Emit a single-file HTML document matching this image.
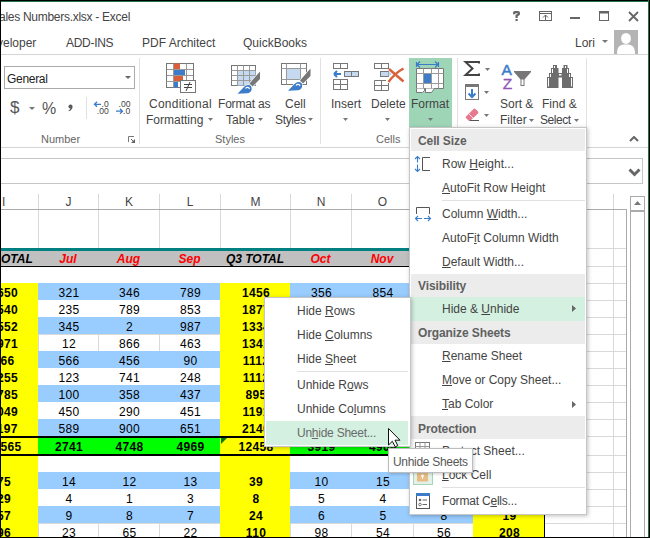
<!DOCTYPE html>
<html><head><meta charset="utf-8"><style>
html,body{margin:0;padding:0;}
body{width:650px;height:538px;overflow:hidden;position:relative;background:#fff;font-family:"Liberation Sans", sans-serif;}
.t{position:absolute;line-height:1;white-space:nowrap;}
.r{position:absolute;}
u{text-decoration:underline;text-underline-offset:1px;}
</style></head><body>
<div class="r" style="left:38px;top:194px;width:1px;height:344px;background:#d9d9d9;"></div>
<div class="r" style="left:98px;top:194px;width:1px;height:344px;background:#d9d9d9;"></div>
<div class="r" style="left:159px;top:194px;width:1px;height:344px;background:#d9d9d9;"></div>
<div class="r" style="left:220px;top:194px;width:1px;height:344px;background:#d9d9d9;"></div>
<div class="r" style="left:290px;top:194px;width:1px;height:344px;background:#d9d9d9;"></div>
<div class="r" style="left:351px;top:194px;width:1px;height:344px;background:#d9d9d9;"></div>
<div class="r" style="left:413px;top:194px;width:1px;height:344px;background:#d9d9d9;"></div>
<div class="r" style="left:473px;top:194px;width:1px;height:344px;background:#d9d9d9;"></div>
<div class="r" style="left:544px;top:194px;width:1px;height:344px;background:#d9d9d9;"></div>
<div class="r" style="left:613px;top:194px;width:1px;height:344px;background:#d9d9d9;"></div>
<div class="r" style="left:0px;top:248px;width:626px;height:1px;background:#d9d9d9;"></div>
<div class="r" style="left:0px;top:266px;width:626px;height:1px;background:#d9d9d9;"></div>
<div class="r" style="left:0px;top:283px;width:626px;height:1px;background:#d9d9d9;"></div>
<div class="r" style="left:0px;top:300px;width:626px;height:1px;background:#d9d9d9;"></div>
<div class="r" style="left:0px;top:317px;width:626px;height:1px;background:#d9d9d9;"></div>
<div class="r" style="left:0px;top:334px;width:626px;height:1px;background:#d9d9d9;"></div>
<div class="r" style="left:0px;top:351px;width:626px;height:1px;background:#d9d9d9;"></div>
<div class="r" style="left:0px;top:368px;width:626px;height:1px;background:#d9d9d9;"></div>
<div class="r" style="left:0px;top:385px;width:626px;height:1px;background:#d9d9d9;"></div>
<div class="r" style="left:0px;top:402px;width:626px;height:1px;background:#d9d9d9;"></div>
<div class="r" style="left:0px;top:419px;width:626px;height:1px;background:#d9d9d9;"></div>
<div class="r" style="left:0px;top:436px;width:626px;height:1px;background:#d9d9d9;"></div>
<div class="r" style="left:0px;top:455px;width:626px;height:1px;background:#d9d9d9;"></div>
<div class="r" style="left:0px;top:472px;width:626px;height:1px;background:#d9d9d9;"></div>
<div class="r" style="left:0px;top:489px;width:626px;height:1px;background:#d9d9d9;"></div>
<div class="r" style="left:0px;top:506px;width:626px;height:1px;background:#d9d9d9;"></div>
<div class="r" style="left:0px;top:523px;width:626px;height:1px;background:#d9d9d9;"></div>
<div class="r" style="left:626px;top:209px;width:1px;height:329px;background:#ababab;"></div>
<div class="r" style="left:0px;top:209px;width:626px;height:1px;background:#ababab;"></div>
<div class="r" style="left:0px;top:248px;width:544px;height:3px;background:#008080;"></div>
<div class="r" style="left:0px;top:251px;width:544px;height:14px;background:#c0c0c0;"></div>
<div class="r" style="left:0px;top:265px;width:544px;height:1px;background:#c9c9c9;"></div>
<div class="r" style="left:0px;top:266px;width:544px;height:1px;background:#000;"></div>
<div class="r" style="left:0px;top:267px;width:544px;height:16px;background:#ffffff;"></div>
<div class="r" style="left:-32px;top:283px;width:70px;height:17px;background:#ffff00;"></div>
<div class="r" style="left:38px;top:283px;width:60px;height:17px;background:#99ccff;"></div>
<div class="r" style="left:98px;top:283px;width:61px;height:17px;background:#99ccff;"></div>
<div class="r" style="left:159px;top:283px;width:61px;height:17px;background:#99ccff;"></div>
<div class="r" style="left:220px;top:283px;width:70px;height:17px;background:#ffff00;"></div>
<div class="r" style="left:290px;top:283px;width:61px;height:17px;background:#99ccff;"></div>
<div class="r" style="left:351px;top:283px;width:62px;height:17px;background:#99ccff;"></div>
<div class="r" style="left:413px;top:283px;width:60px;height:17px;background:#99ccff;"></div>
<div class="r" style="left:473px;top:283px;width:71px;height:17px;background:#ffff00;"></div>
<div class="r" style="left:-32px;top:300px;width:70px;height:17px;background:#ffff00;"></div>
<div class="r" style="left:38px;top:300px;width:60px;height:17px;background:#ffffff;"></div>
<div class="r" style="left:98px;top:300px;width:61px;height:17px;background:#ffffff;"></div>
<div class="r" style="left:159px;top:300px;width:61px;height:17px;background:#ffffff;"></div>
<div class="r" style="left:220px;top:300px;width:70px;height:17px;background:#ffff00;"></div>
<div class="r" style="left:290px;top:300px;width:61px;height:17px;background:#ffffff;"></div>
<div class="r" style="left:351px;top:300px;width:62px;height:17px;background:#ffffff;"></div>
<div class="r" style="left:413px;top:300px;width:60px;height:17px;background:#ffffff;"></div>
<div class="r" style="left:473px;top:300px;width:71px;height:17px;background:#ffff00;"></div>
<div class="r" style="left:-32px;top:317px;width:70px;height:17px;background:#ffff00;"></div>
<div class="r" style="left:38px;top:317px;width:60px;height:17px;background:#99ccff;"></div>
<div class="r" style="left:98px;top:317px;width:61px;height:17px;background:#99ccff;"></div>
<div class="r" style="left:159px;top:317px;width:61px;height:17px;background:#99ccff;"></div>
<div class="r" style="left:220px;top:317px;width:70px;height:17px;background:#ffff00;"></div>
<div class="r" style="left:290px;top:317px;width:61px;height:17px;background:#99ccff;"></div>
<div class="r" style="left:351px;top:317px;width:62px;height:17px;background:#99ccff;"></div>
<div class="r" style="left:413px;top:317px;width:60px;height:17px;background:#99ccff;"></div>
<div class="r" style="left:473px;top:317px;width:71px;height:17px;background:#ffff00;"></div>
<div class="r" style="left:-32px;top:334px;width:70px;height:17px;background:#ffff00;"></div>
<div class="r" style="left:220px;top:334px;width:70px;height:17px;background:#ffff00;"></div>
<div class="r" style="left:473px;top:334px;width:71px;height:17px;background:#ffff00;"></div>
<div class="r" style="left:-32px;top:351px;width:70px;height:17px;background:#ffff00;"></div>
<div class="r" style="left:38px;top:351px;width:60px;height:17px;background:#99ccff;"></div>
<div class="r" style="left:98px;top:351px;width:61px;height:17px;background:#99ccff;"></div>
<div class="r" style="left:159px;top:351px;width:61px;height:17px;background:#99ccff;"></div>
<div class="r" style="left:220px;top:351px;width:70px;height:17px;background:#ffff00;"></div>
<div class="r" style="left:290px;top:351px;width:61px;height:17px;background:#99ccff;"></div>
<div class="r" style="left:351px;top:351px;width:62px;height:17px;background:#99ccff;"></div>
<div class="r" style="left:413px;top:351px;width:60px;height:17px;background:#99ccff;"></div>
<div class="r" style="left:473px;top:351px;width:71px;height:17px;background:#ffff00;"></div>
<div class="r" style="left:-32px;top:368px;width:70px;height:17px;background:#ffff00;"></div>
<div class="r" style="left:38px;top:368px;width:60px;height:17px;background:#ffffff;"></div>
<div class="r" style="left:98px;top:368px;width:61px;height:17px;background:#ffffff;"></div>
<div class="r" style="left:159px;top:368px;width:61px;height:17px;background:#ffffff;"></div>
<div class="r" style="left:220px;top:368px;width:70px;height:17px;background:#ffff00;"></div>
<div class="r" style="left:290px;top:368px;width:61px;height:17px;background:#ffffff;"></div>
<div class="r" style="left:351px;top:368px;width:62px;height:17px;background:#ffffff;"></div>
<div class="r" style="left:413px;top:368px;width:60px;height:17px;background:#ffffff;"></div>
<div class="r" style="left:473px;top:368px;width:71px;height:17px;background:#ffff00;"></div>
<div class="r" style="left:-32px;top:385px;width:70px;height:17px;background:#ffff00;"></div>
<div class="r" style="left:38px;top:385px;width:60px;height:17px;background:#99ccff;"></div>
<div class="r" style="left:98px;top:385px;width:61px;height:17px;background:#99ccff;"></div>
<div class="r" style="left:159px;top:385px;width:61px;height:17px;background:#99ccff;"></div>
<div class="r" style="left:220px;top:385px;width:70px;height:17px;background:#ffff00;"></div>
<div class="r" style="left:290px;top:385px;width:61px;height:17px;background:#99ccff;"></div>
<div class="r" style="left:351px;top:385px;width:62px;height:17px;background:#99ccff;"></div>
<div class="r" style="left:413px;top:385px;width:60px;height:17px;background:#99ccff;"></div>
<div class="r" style="left:473px;top:385px;width:71px;height:17px;background:#ffff00;"></div>
<div class="r" style="left:-32px;top:402px;width:70px;height:17px;background:#ffff00;"></div>
<div class="r" style="left:38px;top:402px;width:60px;height:17px;background:#ffffff;"></div>
<div class="r" style="left:98px;top:402px;width:61px;height:17px;background:#ffffff;"></div>
<div class="r" style="left:159px;top:402px;width:61px;height:17px;background:#ffffff;"></div>
<div class="r" style="left:220px;top:402px;width:70px;height:17px;background:#ffff00;"></div>
<div class="r" style="left:290px;top:402px;width:61px;height:17px;background:#ffffff;"></div>
<div class="r" style="left:351px;top:402px;width:62px;height:17px;background:#ffffff;"></div>
<div class="r" style="left:413px;top:402px;width:60px;height:17px;background:#ffffff;"></div>
<div class="r" style="left:473px;top:402px;width:71px;height:17px;background:#ffff00;"></div>
<div class="r" style="left:-32px;top:419px;width:70px;height:17px;background:#ffff00;"></div>
<div class="r" style="left:38px;top:419px;width:60px;height:17px;background:#99ccff;"></div>
<div class="r" style="left:98px;top:419px;width:61px;height:17px;background:#99ccff;"></div>
<div class="r" style="left:159px;top:419px;width:61px;height:17px;background:#99ccff;"></div>
<div class="r" style="left:220px;top:419px;width:70px;height:17px;background:#ffff00;"></div>
<div class="r" style="left:290px;top:419px;width:61px;height:17px;background:#99ccff;"></div>
<div class="r" style="left:351px;top:419px;width:62px;height:17px;background:#99ccff;"></div>
<div class="r" style="left:413px;top:419px;width:60px;height:17px;background:#99ccff;"></div>
<div class="r" style="left:473px;top:419px;width:71px;height:17px;background:#ffff00;"></div>
<div class="r" style="left:0px;top:436px;width:544px;height:2px;background:#000;"></div>
<div class="r" style="left:-32px;top:438px;width:70px;height:16px;background:#ffff00;"></div>
<div class="r" style="left:38px;top:438px;width:60px;height:16px;background:#00ff00;"></div>
<div class="r" style="left:98px;top:438px;width:61px;height:16px;background:#00ff00;"></div>
<div class="r" style="left:159px;top:438px;width:61px;height:16px;background:#00ff00;"></div>
<div class="r" style="left:220px;top:438px;width:70px;height:16px;background:#ffff00;"></div>
<div class="r" style="left:290px;top:438px;width:61px;height:16px;background:#00ff00;"></div>
<div class="r" style="left:351px;top:438px;width:62px;height:16px;background:#00ff00;"></div>
<div class="r" style="left:413px;top:438px;width:60px;height:16px;background:#00ff00;"></div>
<div class="r" style="left:473px;top:438px;width:71px;height:16px;background:#ffff00;"></div>
<div class="r" style="left:0px;top:454px;width:544px;height:2px;background:#000;"></div>
<div class="r" style="left:-32px;top:456px;width:70px;height:16px;background:#ffff00;"></div>
<div class="r" style="left:38px;top:456px;width:60px;height:16px;background:#ffffff;"></div>
<div class="r" style="left:98px;top:456px;width:61px;height:16px;background:#ffffff;"></div>
<div class="r" style="left:159px;top:456px;width:61px;height:16px;background:#ffffff;"></div>
<div class="r" style="left:220px;top:456px;width:70px;height:16px;background:#ffff00;"></div>
<div class="r" style="left:290px;top:456px;width:61px;height:16px;background:#ffffff;"></div>
<div class="r" style="left:351px;top:456px;width:62px;height:16px;background:#ffffff;"></div>
<div class="r" style="left:413px;top:456px;width:60px;height:16px;background:#ffffff;"></div>
<div class="r" style="left:473px;top:456px;width:71px;height:16px;background:#ffff00;"></div>
<div class="r" style="left:-32px;top:472px;width:70px;height:17px;background:#ffff00;"></div>
<div class="r" style="left:38px;top:472px;width:60px;height:17px;background:#99ccff;"></div>
<div class="r" style="left:98px;top:472px;width:61px;height:17px;background:#99ccff;"></div>
<div class="r" style="left:159px;top:472px;width:61px;height:17px;background:#99ccff;"></div>
<div class="r" style="left:220px;top:472px;width:70px;height:17px;background:#ffff00;"></div>
<div class="r" style="left:290px;top:472px;width:61px;height:17px;background:#99ccff;"></div>
<div class="r" style="left:351px;top:472px;width:62px;height:17px;background:#99ccff;"></div>
<div class="r" style="left:413px;top:472px;width:60px;height:17px;background:#99ccff;"></div>
<div class="r" style="left:473px;top:472px;width:71px;height:17px;background:#ffff00;"></div>
<div class="r" style="left:-32px;top:489px;width:70px;height:17px;background:#ffff00;"></div>
<div class="r" style="left:38px;top:489px;width:60px;height:17px;background:#ffffff;"></div>
<div class="r" style="left:98px;top:489px;width:61px;height:17px;background:#ffffff;"></div>
<div class="r" style="left:159px;top:489px;width:61px;height:17px;background:#ffffff;"></div>
<div class="r" style="left:220px;top:489px;width:70px;height:17px;background:#ffff00;"></div>
<div class="r" style="left:290px;top:489px;width:61px;height:17px;background:#ffffff;"></div>
<div class="r" style="left:351px;top:489px;width:62px;height:17px;background:#ffffff;"></div>
<div class="r" style="left:413px;top:489px;width:60px;height:17px;background:#ffffff;"></div>
<div class="r" style="left:473px;top:489px;width:71px;height:17px;background:#ffff00;"></div>
<div class="r" style="left:-32px;top:506px;width:70px;height:17px;background:#ffff00;"></div>
<div class="r" style="left:38px;top:506px;width:60px;height:17px;background:#99ccff;"></div>
<div class="r" style="left:98px;top:506px;width:61px;height:17px;background:#99ccff;"></div>
<div class="r" style="left:159px;top:506px;width:61px;height:17px;background:#99ccff;"></div>
<div class="r" style="left:220px;top:506px;width:70px;height:17px;background:#ffff00;"></div>
<div class="r" style="left:290px;top:506px;width:61px;height:17px;background:#99ccff;"></div>
<div class="r" style="left:351px;top:506px;width:62px;height:17px;background:#99ccff;"></div>
<div class="r" style="left:413px;top:506px;width:60px;height:17px;background:#99ccff;"></div>
<div class="r" style="left:473px;top:506px;width:71px;height:17px;background:#ffff00;"></div>
<div class="r" style="left:-32px;top:523px;width:70px;height:17px;background:#ffff00;"></div>
<div class="r" style="left:220px;top:523px;width:70px;height:17px;background:#ffff00;"></div>
<div class="r" style="left:473px;top:523px;width:71px;height:17px;background:#ffff00;"></div>
<div class="r" style="left:544px;top:283px;width:1px;height:255px;background:#000;"></div>
<div class="t" style="left:2px;top:196px;font-size:12px;color:#444">I</div>
<div class="t" style="left:38.5px;top:196px;width:60px;text-align:center;font-size:12px;color:#444;font-weight:normal;font-style:normal;">J</div>
<div class="t" style="left:98.5px;top:196px;width:61px;text-align:center;font-size:12px;color:#444;font-weight:normal;font-style:normal;">K</div>
<div class="t" style="left:159.5px;top:196px;width:61px;text-align:center;font-size:12px;color:#444;font-weight:normal;font-style:normal;">L</div>
<div class="t" style="left:220.5px;top:196px;width:70px;text-align:center;font-size:12px;color:#444;font-weight:normal;font-style:normal;">M</div>
<div class="t" style="left:290.5px;top:196px;width:61px;text-align:center;font-size:12px;color:#444;font-weight:normal;font-style:normal;">N</div>
<div class="t" style="left:351.5px;top:196px;width:62px;text-align:center;font-size:12px;color:#444;font-weight:normal;font-style:normal;">O</div>
<div class="t" style="left:413.5px;top:196px;width:60px;text-align:center;font-size:12px;color:#444;font-weight:normal;font-style:normal;">P</div>
<div class="t" style="left:473.5px;top:196px;width:71px;text-align:center;font-size:12px;color:#444;font-weight:normal;font-style:normal;">Q</div>
<div class="t" style="left:544.5px;top:196px;width:69px;text-align:center;font-size:12px;color:#444;font-weight:normal;font-style:normal;">R</div>
<div class="t" style="left:1px;top:253px;font-size:12px;color:#000;font-weight:bold;font-style:italic">OTAL</div>
<div class="t" style="left:38px;top:253px;width:60px;text-align:center;font-size:12px;color:#ff0000;font-weight:bold;font-style:italic;">Jul</div>
<div class="t" style="left:98px;top:253px;width:61px;text-align:center;font-size:12px;color:#ff0000;font-weight:bold;font-style:italic;">Aug</div>
<div class="t" style="left:159px;top:253px;width:61px;text-align:center;font-size:12px;color:#ff0000;font-weight:bold;font-style:italic;">Sep</div>
<div class="t" style="left:220px;top:253px;width:70px;text-align:center;font-size:12px;color:#000;font-weight:bold;font-style:italic;">Q3 TOTAL</div>
<div class="t" style="left:290px;top:253px;width:61px;text-align:center;font-size:12px;color:#ff0000;font-weight:bold;font-style:italic;">Oct</div>
<div class="t" style="left:351px;top:253px;width:62px;text-align:center;font-size:12px;color:#ff0000;font-weight:bold;font-style:italic;">Nov</div>
<div class="t" style="left:413px;top:253px;width:60px;text-align:center;font-size:12px;color:#ff0000;font-weight:bold;font-style:italic;">Dec</div>
<div class="t" style="left:473px;top:253px;width:71px;text-align:center;font-size:12px;color:#000;font-weight:bold;font-style:italic;">Q4 TOTAL</div>
<div class="t" style="left:-31px;top:287px;width:70px;text-align:center;font-size:12px;color:#000;font-weight:bold;font-style:normal;letter-spacing:0.3px;">1650</div>
<div class="t" style="left:39px;top:287px;width:60px;text-align:center;font-size:12px;color:#000;font-weight:normal;font-style:normal;letter-spacing:0.3px;">321</div>
<div class="t" style="left:99px;top:287px;width:61px;text-align:center;font-size:12px;color:#000;font-weight:normal;font-style:normal;letter-spacing:0.3px;">346</div>
<div class="t" style="left:160px;top:287px;width:61px;text-align:center;font-size:12px;color:#000;font-weight:normal;font-style:normal;letter-spacing:0.3px;">789</div>
<div class="t" style="left:221px;top:287px;width:70px;text-align:center;font-size:12px;color:#000;font-weight:bold;font-style:normal;letter-spacing:0.3px;">1456</div>
<div class="t" style="left:291px;top:287px;width:61px;text-align:center;font-size:12px;color:#000;font-weight:normal;font-style:normal;letter-spacing:0.3px;">356</div>
<div class="t" style="left:352px;top:287px;width:62px;text-align:center;font-size:12px;color:#000;font-weight:normal;font-style:normal;letter-spacing:0.3px;">854</div>
<div class="t" style="left:414px;top:287px;width:60px;text-align:center;font-size:12px;color:#000;font-weight:normal;font-style:normal;letter-spacing:0.3px;">512</div>
<div class="t" style="left:474px;top:287px;width:71px;text-align:center;font-size:12px;color:#000;font-weight:bold;font-style:normal;letter-spacing:0.3px;">1722</div>
<div class="t" style="left:-31px;top:304px;width:70px;text-align:center;font-size:12px;color:#000;font-weight:bold;font-style:normal;letter-spacing:0.3px;">1540</div>
<div class="t" style="left:39px;top:304px;width:60px;text-align:center;font-size:12px;color:#000;font-weight:normal;font-style:normal;letter-spacing:0.3px;">235</div>
<div class="t" style="left:99px;top:304px;width:61px;text-align:center;font-size:12px;color:#000;font-weight:normal;font-style:normal;letter-spacing:0.3px;">789</div>
<div class="t" style="left:160px;top:304px;width:61px;text-align:center;font-size:12px;color:#000;font-weight:normal;font-style:normal;letter-spacing:0.3px;">853</div>
<div class="t" style="left:221px;top:304px;width:70px;text-align:center;font-size:12px;color:#000;font-weight:bold;font-style:normal;letter-spacing:0.3px;">1877</div>
<div class="t" style="left:291px;top:304px;width:61px;text-align:center;font-size:12px;color:#000;font-weight:normal;font-style:normal;letter-spacing:0.3px;">412</div>
<div class="t" style="left:352px;top:304px;width:62px;text-align:center;font-size:12px;color:#000;font-weight:normal;font-style:normal;letter-spacing:0.3px;">633</div>
<div class="t" style="left:414px;top:304px;width:60px;text-align:center;font-size:12px;color:#000;font-weight:normal;font-style:normal;letter-spacing:0.3px;">278</div>
<div class="t" style="left:474px;top:304px;width:71px;text-align:center;font-size:12px;color:#000;font-weight:bold;font-style:normal;letter-spacing:0.3px;">1323</div>
<div class="t" style="left:-31px;top:321px;width:70px;text-align:center;font-size:12px;color:#000;font-weight:bold;font-style:normal;letter-spacing:0.3px;">1552</div>
<div class="t" style="left:39px;top:321px;width:60px;text-align:center;font-size:12px;color:#000;font-weight:normal;font-style:normal;letter-spacing:0.3px;">345</div>
<div class="t" style="left:99px;top:321px;width:61px;text-align:center;font-size:12px;color:#000;font-weight:normal;font-style:normal;letter-spacing:0.3px;">2</div>
<div class="t" style="left:160px;top:321px;width:61px;text-align:center;font-size:12px;color:#000;font-weight:normal;font-style:normal;letter-spacing:0.3px;">987</div>
<div class="t" style="left:221px;top:321px;width:70px;text-align:center;font-size:12px;color:#000;font-weight:bold;font-style:normal;letter-spacing:0.3px;">1334</div>
<div class="t" style="left:291px;top:321px;width:61px;text-align:center;font-size:12px;color:#000;font-weight:normal;font-style:normal;letter-spacing:0.3px;">234</div>
<div class="t" style="left:352px;top:321px;width:62px;text-align:center;font-size:12px;color:#000;font-weight:normal;font-style:normal;letter-spacing:0.3px;">567</div>
<div class="t" style="left:414px;top:321px;width:60px;text-align:center;font-size:12px;color:#000;font-weight:normal;font-style:normal;letter-spacing:0.3px;">890</div>
<div class="t" style="left:474px;top:321px;width:71px;text-align:center;font-size:12px;color:#000;font-weight:bold;font-style:normal;letter-spacing:0.3px;">1691</div>
<div class="t" style="left:-31px;top:338px;width:70px;text-align:center;font-size:12px;color:#000;font-weight:bold;font-style:normal;letter-spacing:0.3px;">1971</div>
<div class="t" style="left:39px;top:338px;width:60px;text-align:center;font-size:12px;color:#000;font-weight:normal;font-style:normal;letter-spacing:0.3px;">12</div>
<div class="t" style="left:99px;top:338px;width:61px;text-align:center;font-size:12px;color:#000;font-weight:normal;font-style:normal;letter-spacing:0.3px;">866</div>
<div class="t" style="left:160px;top:338px;width:61px;text-align:center;font-size:12px;color:#000;font-weight:normal;font-style:normal;letter-spacing:0.3px;">463</div>
<div class="t" style="left:221px;top:338px;width:70px;text-align:center;font-size:12px;color:#000;font-weight:bold;font-style:normal;letter-spacing:0.3px;">1341</div>
<div class="t" style="left:291px;top:338px;width:61px;text-align:center;font-size:12px;color:#000;font-weight:normal;font-style:normal;letter-spacing:0.3px;">678</div>
<div class="t" style="left:352px;top:338px;width:62px;text-align:center;font-size:12px;color:#000;font-weight:normal;font-style:normal;letter-spacing:0.3px;">123</div>
<div class="t" style="left:414px;top:338px;width:60px;text-align:center;font-size:12px;color:#000;font-weight:normal;font-style:normal;letter-spacing:0.3px;">456</div>
<div class="t" style="left:474px;top:338px;width:71px;text-align:center;font-size:12px;color:#000;font-weight:bold;font-style:normal;letter-spacing:0.3px;">1257</div>
<div class="t" style="left:-31px;top:355px;width:70px;text-align:center;font-size:12px;color:#000;font-weight:bold;font-style:normal;letter-spacing:0.3px;">866</div>
<div class="t" style="left:39px;top:355px;width:60px;text-align:center;font-size:12px;color:#000;font-weight:normal;font-style:normal;letter-spacing:0.3px;">566</div>
<div class="t" style="left:99px;top:355px;width:61px;text-align:center;font-size:12px;color:#000;font-weight:normal;font-style:normal;letter-spacing:0.3px;">456</div>
<div class="t" style="left:160px;top:355px;width:61px;text-align:center;font-size:12px;color:#000;font-weight:normal;font-style:normal;letter-spacing:0.3px;">90</div>
<div class="t" style="left:221px;top:355px;width:70px;text-align:center;font-size:12px;color:#000;font-weight:bold;font-style:normal;letter-spacing:0.3px;">1112</div>
<div class="t" style="left:291px;top:355px;width:61px;text-align:center;font-size:12px;color:#000;font-weight:normal;font-style:normal;letter-spacing:0.3px;">345</div>
<div class="t" style="left:352px;top:355px;width:62px;text-align:center;font-size:12px;color:#000;font-weight:normal;font-style:normal;letter-spacing:0.3px;">789</div>
<div class="t" style="left:414px;top:355px;width:60px;text-align:center;font-size:12px;color:#000;font-weight:normal;font-style:normal;letter-spacing:0.3px;">234</div>
<div class="t" style="left:474px;top:355px;width:71px;text-align:center;font-size:12px;color:#000;font-weight:bold;font-style:normal;letter-spacing:0.3px;">1368</div>
<div class="t" style="left:-31px;top:372px;width:70px;text-align:center;font-size:12px;color:#000;font-weight:bold;font-style:normal;letter-spacing:0.3px;">1255</div>
<div class="t" style="left:39px;top:372px;width:60px;text-align:center;font-size:12px;color:#000;font-weight:normal;font-style:normal;letter-spacing:0.3px;">123</div>
<div class="t" style="left:99px;top:372px;width:61px;text-align:center;font-size:12px;color:#000;font-weight:normal;font-style:normal;letter-spacing:0.3px;">741</div>
<div class="t" style="left:160px;top:372px;width:61px;text-align:center;font-size:12px;color:#000;font-weight:normal;font-style:normal;letter-spacing:0.3px;">248</div>
<div class="t" style="left:221px;top:372px;width:70px;text-align:center;font-size:12px;color:#000;font-weight:bold;font-style:normal;letter-spacing:0.3px;">1112</div>
<div class="t" style="left:291px;top:372px;width:61px;text-align:center;font-size:12px;color:#000;font-weight:normal;font-style:normal;letter-spacing:0.3px;">567</div>
<div class="t" style="left:352px;top:372px;width:62px;text-align:center;font-size:12px;color:#000;font-weight:normal;font-style:normal;letter-spacing:0.3px;">234</div>
<div class="t" style="left:414px;top:372px;width:60px;text-align:center;font-size:12px;color:#000;font-weight:normal;font-style:normal;letter-spacing:0.3px;">789</div>
<div class="t" style="left:474px;top:372px;width:71px;text-align:center;font-size:12px;color:#000;font-weight:bold;font-style:normal;letter-spacing:0.3px;">1590</div>
<div class="t" style="left:-31px;top:389px;width:70px;text-align:center;font-size:12px;color:#000;font-weight:bold;font-style:normal;letter-spacing:0.3px;">1785</div>
<div class="t" style="left:39px;top:389px;width:60px;text-align:center;font-size:12px;color:#000;font-weight:normal;font-style:normal;letter-spacing:0.3px;">100</div>
<div class="t" style="left:99px;top:389px;width:61px;text-align:center;font-size:12px;color:#000;font-weight:normal;font-style:normal;letter-spacing:0.3px;">358</div>
<div class="t" style="left:160px;top:389px;width:61px;text-align:center;font-size:12px;color:#000;font-weight:normal;font-style:normal;letter-spacing:0.3px;">437</div>
<div class="t" style="left:221px;top:389px;width:70px;text-align:center;font-size:12px;color:#000;font-weight:bold;font-style:normal;letter-spacing:0.3px;">895</div>
<div class="t" style="left:291px;top:389px;width:61px;text-align:center;font-size:12px;color:#000;font-weight:normal;font-style:normal;letter-spacing:0.3px;">890</div>
<div class="t" style="left:352px;top:389px;width:62px;text-align:center;font-size:12px;color:#000;font-weight:normal;font-style:normal;letter-spacing:0.3px;">456</div>
<div class="t" style="left:414px;top:389px;width:60px;text-align:center;font-size:12px;color:#000;font-weight:normal;font-style:normal;letter-spacing:0.3px;">123</div>
<div class="t" style="left:474px;top:389px;width:71px;text-align:center;font-size:12px;color:#000;font-weight:bold;font-style:normal;letter-spacing:0.3px;">1469</div>
<div class="t" style="left:-31px;top:406px;width:70px;text-align:center;font-size:12px;color:#000;font-weight:bold;font-style:normal;letter-spacing:0.3px;">1049</div>
<div class="t" style="left:39px;top:406px;width:60px;text-align:center;font-size:12px;color:#000;font-weight:normal;font-style:normal;letter-spacing:0.3px;">450</div>
<div class="t" style="left:99px;top:406px;width:61px;text-align:center;font-size:12px;color:#000;font-weight:normal;font-style:normal;letter-spacing:0.3px;">290</div>
<div class="t" style="left:160px;top:406px;width:61px;text-align:center;font-size:12px;color:#000;font-weight:normal;font-style:normal;letter-spacing:0.3px;">451</div>
<div class="t" style="left:221px;top:406px;width:70px;text-align:center;font-size:12px;color:#000;font-weight:bold;font-style:normal;letter-spacing:0.3px;">1191</div>
<div class="t" style="left:291px;top:406px;width:61px;text-align:center;font-size:12px;color:#000;font-weight:normal;font-style:normal;letter-spacing:0.3px;">123</div>
<div class="t" style="left:352px;top:406px;width:62px;text-align:center;font-size:12px;color:#000;font-weight:normal;font-style:normal;letter-spacing:0.3px;">789</div>
<div class="t" style="left:414px;top:406px;width:60px;text-align:center;font-size:12px;color:#000;font-weight:normal;font-style:normal;letter-spacing:0.3px;">456</div>
<div class="t" style="left:474px;top:406px;width:71px;text-align:center;font-size:12px;color:#000;font-weight:bold;font-style:normal;letter-spacing:0.3px;">1368</div>
<div class="t" style="left:-31px;top:423px;width:70px;text-align:center;font-size:12px;color:#000;font-weight:bold;font-style:normal;letter-spacing:0.3px;">1197</div>
<div class="t" style="left:39px;top:423px;width:60px;text-align:center;font-size:12px;color:#000;font-weight:normal;font-style:normal;letter-spacing:0.3px;">589</div>
<div class="t" style="left:99px;top:423px;width:61px;text-align:center;font-size:12px;color:#000;font-weight:normal;font-style:normal;letter-spacing:0.3px;">900</div>
<div class="t" style="left:160px;top:423px;width:61px;text-align:center;font-size:12px;color:#000;font-weight:normal;font-style:normal;letter-spacing:0.3px;">651</div>
<div class="t" style="left:221px;top:423px;width:70px;text-align:center;font-size:12px;color:#000;font-weight:bold;font-style:normal;letter-spacing:0.3px;">2140</div>
<div class="t" style="left:291px;top:423px;width:61px;text-align:center;font-size:12px;color:#000;font-weight:normal;font-style:normal;letter-spacing:0.3px;">234</div>
<div class="t" style="left:352px;top:423px;width:62px;text-align:center;font-size:12px;color:#000;font-weight:normal;font-style:normal;letter-spacing:0.3px;">567</div>
<div class="t" style="left:414px;top:423px;width:60px;text-align:center;font-size:12px;color:#000;font-weight:normal;font-style:normal;letter-spacing:0.3px;">890</div>
<div class="t" style="left:474px;top:423px;width:71px;text-align:center;font-size:12px;color:#000;font-weight:bold;font-style:normal;letter-spacing:0.3px;">1691</div>
<div class="t" style="left:-31px;top:441px;width:70px;text-align:center;font-size:12px;color:#000;font-weight:bold;font-style:normal;letter-spacing:0.3px;">12565</div>
<div class="t" style="left:39px;top:441px;width:60px;text-align:center;font-size:12px;color:#000;font-weight:bold;font-style:normal;letter-spacing:0.3px;">2741</div>
<div class="t" style="left:99px;top:441px;width:61px;text-align:center;font-size:12px;color:#000;font-weight:bold;font-style:normal;letter-spacing:0.3px;">4748</div>
<div class="t" style="left:160px;top:441px;width:61px;text-align:center;font-size:12px;color:#000;font-weight:bold;font-style:normal;letter-spacing:0.3px;">4969</div>
<div class="t" style="left:221px;top:441px;width:70px;text-align:center;font-size:12px;color:#000;font-weight:bold;font-style:normal;letter-spacing:0.3px;">12458</div>
<div class="t" style="left:291px;top:441px;width:61px;text-align:center;font-size:12px;color:#000;font-weight:bold;font-style:normal;letter-spacing:0.3px;">3919</div>
<div class="t" style="left:352px;top:441px;width:62px;text-align:center;font-size:12px;color:#000;font-weight:bold;font-style:normal;letter-spacing:0.3px;">4908</div>
<div class="t" style="left:414px;top:441px;width:60px;text-align:center;font-size:12px;color:#000;font-weight:bold;font-style:normal;letter-spacing:0.3px;">4628</div>
<div class="t" style="left:474px;top:441px;width:71px;text-align:center;font-size:12px;color:#000;font-weight:bold;font-style:normal;letter-spacing:0.3px;">13455</div>
<div class="t" style="left:-31px;top:476px;width:70px;text-align:center;font-size:12px;color:#000;font-weight:bold;font-style:normal;letter-spacing:0.3px;">75</div>
<div class="t" style="left:39px;top:476px;width:60px;text-align:center;font-size:12px;color:#000;font-weight:normal;font-style:normal;letter-spacing:0.3px;">14</div>
<div class="t" style="left:99px;top:476px;width:61px;text-align:center;font-size:12px;color:#000;font-weight:normal;font-style:normal;letter-spacing:0.3px;">12</div>
<div class="t" style="left:160px;top:476px;width:61px;text-align:center;font-size:12px;color:#000;font-weight:normal;font-style:normal;letter-spacing:0.3px;">13</div>
<div class="t" style="left:221px;top:476px;width:70px;text-align:center;font-size:12px;color:#000;font-weight:bold;font-style:normal;letter-spacing:0.3px;">39</div>
<div class="t" style="left:291px;top:476px;width:61px;text-align:center;font-size:12px;color:#000;font-weight:normal;font-style:normal;letter-spacing:0.3px;">10</div>
<div class="t" style="left:352px;top:476px;width:62px;text-align:center;font-size:12px;color:#000;font-weight:normal;font-style:normal;letter-spacing:0.3px;">15</div>
<div class="t" style="left:414px;top:476px;width:60px;text-align:center;font-size:12px;color:#000;font-weight:normal;font-style:normal;letter-spacing:0.3px;">16</div>
<div class="t" style="left:474px;top:476px;width:71px;text-align:center;font-size:12px;color:#000;font-weight:bold;font-style:normal;letter-spacing:0.3px;">41</div>
<div class="t" style="left:-31px;top:493px;width:70px;text-align:center;font-size:12px;color:#000;font-weight:bold;font-style:normal;letter-spacing:0.3px;">29</div>
<div class="t" style="left:39px;top:493px;width:60px;text-align:center;font-size:12px;color:#000;font-weight:normal;font-style:normal;letter-spacing:0.3px;">4</div>
<div class="t" style="left:99px;top:493px;width:61px;text-align:center;font-size:12px;color:#000;font-weight:normal;font-style:normal;letter-spacing:0.3px;">1</div>
<div class="t" style="left:160px;top:493px;width:61px;text-align:center;font-size:12px;color:#000;font-weight:normal;font-style:normal;letter-spacing:0.3px;">3</div>
<div class="t" style="left:221px;top:493px;width:70px;text-align:center;font-size:12px;color:#000;font-weight:bold;font-style:normal;letter-spacing:0.3px;">8</div>
<div class="t" style="left:291px;top:493px;width:61px;text-align:center;font-size:12px;color:#000;font-weight:normal;font-style:normal;letter-spacing:0.3px;">5</div>
<div class="t" style="left:352px;top:493px;width:62px;text-align:center;font-size:12px;color:#000;font-weight:normal;font-style:normal;letter-spacing:0.3px;">4</div>
<div class="t" style="left:414px;top:493px;width:60px;text-align:center;font-size:12px;color:#000;font-weight:normal;font-style:normal;letter-spacing:0.3px;">6</div>
<div class="t" style="left:474px;top:493px;width:71px;text-align:center;font-size:12px;color:#000;font-weight:bold;font-style:normal;letter-spacing:0.3px;">15</div>
<div class="t" style="left:-31px;top:510px;width:70px;text-align:center;font-size:12px;color:#000;font-weight:bold;font-style:normal;letter-spacing:0.3px;">57</div>
<div class="t" style="left:39px;top:510px;width:60px;text-align:center;font-size:12px;color:#000;font-weight:normal;font-style:normal;letter-spacing:0.3px;">9</div>
<div class="t" style="left:99px;top:510px;width:61px;text-align:center;font-size:12px;color:#000;font-weight:normal;font-style:normal;letter-spacing:0.3px;">8</div>
<div class="t" style="left:160px;top:510px;width:61px;text-align:center;font-size:12px;color:#000;font-weight:normal;font-style:normal;letter-spacing:0.3px;">7</div>
<div class="t" style="left:221px;top:510px;width:70px;text-align:center;font-size:12px;color:#000;font-weight:bold;font-style:normal;letter-spacing:0.3px;">24</div>
<div class="t" style="left:291px;top:510px;width:61px;text-align:center;font-size:12px;color:#000;font-weight:normal;font-style:normal;letter-spacing:0.3px;">6</div>
<div class="t" style="left:352px;top:510px;width:62px;text-align:center;font-size:12px;color:#000;font-weight:normal;font-style:normal;letter-spacing:0.3px;">5</div>
<div class="t" style="left:414px;top:510px;width:60px;text-align:center;font-size:12px;color:#000;font-weight:normal;font-style:normal;letter-spacing:0.3px;">8</div>
<div class="t" style="left:474px;top:510px;width:71px;text-align:center;font-size:12px;color:#000;font-weight:bold;font-style:normal;letter-spacing:0.3px;">19</div>
<div class="t" style="left:-31px;top:527px;width:70px;text-align:center;font-size:12px;color:#000;font-weight:bold;font-style:normal;letter-spacing:0.3px;">96</div>
<div class="t" style="left:39px;top:527px;width:60px;text-align:center;font-size:12px;color:#000;font-weight:normal;font-style:normal;letter-spacing:0.3px;">23</div>
<div class="t" style="left:99px;top:527px;width:61px;text-align:center;font-size:12px;color:#000;font-weight:normal;font-style:normal;letter-spacing:0.3px;">65</div>
<div class="t" style="left:160px;top:527px;width:61px;text-align:center;font-size:12px;color:#000;font-weight:normal;font-style:normal;letter-spacing:0.3px;">22</div>
<div class="t" style="left:221px;top:527px;width:70px;text-align:center;font-size:12px;color:#000;font-weight:bold;font-style:normal;letter-spacing:0.3px;">110</div>
<div class="t" style="left:291px;top:527px;width:61px;text-align:center;font-size:12px;color:#000;font-weight:normal;font-style:normal;letter-spacing:0.3px;">98</div>
<div class="t" style="left:352px;top:527px;width:62px;text-align:center;font-size:12px;color:#000;font-weight:normal;font-style:normal;letter-spacing:0.3px;">54</div>
<div class="t" style="left:414px;top:527px;width:60px;text-align:center;font-size:12px;color:#000;font-weight:normal;font-style:normal;letter-spacing:0.3px;">56</div>
<div class="t" style="left:474px;top:527px;width:71px;text-align:center;font-size:12px;color:#000;font-weight:bold;font-style:normal;letter-spacing:0.3px;">208</div>
<svg class="r" style="left:221px;top:438px" width="7" height="7"><polygon points="0,0 6,0 0,6" fill="#008000"/></svg>
<div class="r" style="left:0px;top:0px;width:650px;height:194px;background:#fff;"></div>
<div class="t" style="left:-1px;top:11px;font-size:12px;color:#444;font-weight:normal;font-style:normal;letter-spacing:-0.28px">ales Numbers.xlsx - Excel</div>
<svg class="r" style="left:513px;top:11px" width="8" height="10"><path d="M0 2 Q0 0 2 0 H5 Q7 0 7 2 V3 Q7 4.3 5.5 4.8 L4.7 5.2 V7 H2.5 V4.6 Q2.5 3.6 3.6 3.3 L4.6 3 V2.2 H2.3 V3.3 H0 Z" fill="#666"/><rect x="2.5" y="8" width="2.2" height="2" fill="#666"/></svg>
<svg class="r" style="left:539px;top:11px" width="13" height="10"><rect x="0.5" y="0.5" width="12" height="9" fill="none" stroke="#666"/><rect x="1" y="2" width="11" height="1" fill="#666"/><path d="M4 6.5 L6.5 4 L9 6.5 M6.5 4 V9.5" stroke="#666" fill="none"/></svg>
<div class="r" style="left:570px;top:17px;width:10px;height:2px;background:#666;"></div>
<svg class="r" style="left:599px;top:11px" width="10" height="10"><rect x="0.5" y="0.5" width="9" height="9" fill="none" stroke="#666"/><rect x="0" y="0" width="10" height="2.5" fill="#666"/></svg>
<svg class="r" style="left:628px;top:11px" width="11" height="11"><path d="M1 1 L10 10 M10 1 L1 10" stroke="#666" stroke-width="1.8" fill="none"/></svg>
<div class="t" style="left:-3px;top:37px;font-size:12px;color:#444;font-weight:normal;font-style:normal;letter-spacing:0px">veloper</div>
<div class="t" style="left:66px;top:37px;font-size:12px;color:#444;font-weight:normal;font-style:normal;letter-spacing:-0.3px">ADD-INS</div>
<div class="t" style="left:142px;top:37px;font-size:12px;color:#444;font-weight:normal;font-style:normal;letter-spacing:0px">PDF Architect</div>
<div class="t" style="left:243px;top:37px;font-size:12px;color:#444;font-weight:normal;font-style:normal;letter-spacing:0px">QuickBooks</div>
<div class="t" style="left:575px;top:37px;font-size:12px;color:#444;font-weight:normal;font-style:normal;">Lori</div>
<svg class="r" style="left:602px;top:40px" width="6" height="4"><polygon points="0,0 6,0 3,3" fill="#777"/></svg>
<svg class="r" style="left:614px;top:30px" width="24" height="24"><rect width="24" height="24" fill="#b4b4b4"/><ellipse cx="12" cy="8.4" rx="4.9" ry="5.5" fill="#fff"/><path d="M3 24 C3 16 6 14.5 12 14.5 C18 14.5 21 16 21 24 Z" fill="#fff"/></svg>
<div class="r" style="left:0px;top:54px;width:650px;height:1px;background:#d4d4d4;"></div>
<div class="r" style="left:0px;top:147px;width:650px;height:1px;background:#d4d4d4;"></div>
<div class="r" style="left:139px;top:58px;width:1px;height:86px;background:#e1e1e1;"></div>
<div class="r" style="left:320px;top:58px;width:1px;height:86px;background:#e1e1e1;"></div>
<div class="r" style="left:457px;top:58px;width:1px;height:86px;background:#e1e1e1;"></div>
<div class="r" style="left:586px;top:58px;width:1px;height:86px;background:#e1e1e1;"></div>
<div class="r" style="left:4px;top:66px;width:129px;height:21px;border:1px solid #ababab;background:#fff"></div>
<div class="t" style="left:7px;top:73px;font-size:12px;color:#222;font-weight:normal;font-style:normal;letter-spacing:-0.3px">General</div>
<svg class="r" style="left:125px;top:76px" width="6" height="4"><polygon points="0,0 6,0 3,3" fill="#666"/></svg>
<div class="t" style="left:10px;top:99px;font-size:17px;color:#555;font-weight:normal;font-style:normal;">$</div>
<svg class="r" style="left:29px;top:107px" width="6" height="4"><polygon points="0,0 6,0 3,3" fill="#777"/></svg>
<div class="t" style="left:42px;top:101px;font-size:16px;color:#555;font-weight:normal;font-style:normal;">%</div>
<svg class="r" style="left:67px;top:104px" width="7" height="8"><path d="M1.4 2.6 A2.1 2.1 0 1 1 5.6 2.6 Q5.6 5.9 1.9 7.3 L1.5 6.5 Q3.3 5.4 3.4 4.6 A2.1 2.1 0 0 1 1.4 2.6 Z" fill="#5a5a5a"/></svg>
<div class="r" style="left:86px;top:97px;width:1px;height:22px;background:#e1e1e1;"></div>
<svg class="r" style="left:93px;top:100px" width="16" height="16">
<path d="M1.5 4.3 H8 M4 1.8 L1.5 4.3 L4 6.8" stroke="#3a7cc8" stroke-width="1.3" fill="none"/>
<text x="8.5" y="6.8" font-family="Liberation Sans" font-size="8.6" fill="#444">.0</text>
<text x="3.8" y="14" font-family="Liberation Sans" font-size="8.6" fill="#444">.00</text></svg>
<svg class="r" style="left:115px;top:100px" width="17" height="16">
<text x="3.5" y="6.8" font-family="Liberation Sans" font-size="8.6" fill="#444">.00</text>
<path d="M1 11.2 H7.5 M5 8.7 L7.5 11.2 L5 13.7" stroke="#3a7cc8" stroke-width="1.3" fill="none"/>
<text x="8" y="14" font-family="Liberation Sans" font-size="8.6" fill="#444">.0</text></svg>
<div class="t" style="left:41px;top:134px;font-size:11px;color:#666;font-weight:normal;font-style:normal;">Number</div>
<svg class="r" style="left:128px;top:136px" width="8" height="8"><path d="M0.5 6 V0.5 H6" stroke="#777" fill="none"/><polygon points="7,3 7,7 3,7" fill="#666"/><path d="M3 3 L5.5 5.5" stroke="#666" fill="none"/></svg>
<svg class="r" style="left:165px;top:62px" width="32" height="32">
<rect x="1.5" y="1.5" width="27" height="24" fill="#fff" stroke="#777" stroke-width="1"/>
<rect x="8" y="1.5" width="7" height="6" fill="#d9603b"/>
<rect x="8" y="7.5" width="12" height="6" fill="#3d7cc9"/>
<rect x="8" y="13.5" width="10" height="6" fill="#d9603b"/>
<rect x="8" y="19.5" width="5" height="6" fill="#3d7cc9"/>
<path d="M8.5 1.5 V25.5 M21.5 1.5 V25.5 M1.5 7.5 H28.5 M1.5 13.5 H28.5 M1.5 19.5 H28.5" stroke="#999" stroke-width="1" fill="none"/>
<rect x="15.5" y="18.5" width="15" height="12" fill="#fff" stroke="#777" stroke-width="1"/>
<path d="M19 22.5 H27 M19 25.5 H27 M25 20 L21 29" stroke="#444" stroke-width="1" fill="none"/>
</svg>
<svg class="r" style="left:230px;top:63px" width="32" height="32">
<rect x="1.5" y="2.5" width="24" height="20" fill="#fff" stroke="#777"/>
<rect x="7.5" y="7.5" width="18" height="15" fill="#c5d9f1"/>
<path d="M7.5 2.5 V22.5 M13.5 2.5 V22.5 M19.5 2.5 V22.5 M1.5 7.5 H25.5 M1.5 12.5 H25.5 M1.5 17.5 H25.5" stroke="#999" fill="none"/>
<path d="M30 8.5 L30 16 L22.5 23.5 L19.5 20.5 Z" fill="#777" stroke="#fff" stroke-width="1.2" paint-order="stroke"/>
<path d="M21 23 C22.5 26 21.5 29.5 17.5 30.3 L7.5 30.8 L14 24 C16 21.8 19 21.3 21 23 Z" fill="#3d7cc9" stroke="#fff" stroke-width="1.2" paint-order="stroke"/>
<path d="M15.5 25.5 C16.5 24 19 24 19.5 26" stroke="#fff" stroke-width="1.2" fill="none"/>
</svg>
<svg class="r" style="left:280px;top:62px" width="32" height="32">
<rect x="1.5" y="1.5" width="25" height="21" fill="#fff" stroke="#777"/>
<rect x="6.5" y="6.5" width="14" height="11" fill="#c5d9f1"/>
<path d="M6.5 1.5 V22.5 M20.5 1.5 V22.5 M1.5 6.5 H26.5 M1.5 17.5 H26.5" stroke="#999" fill="none"/>
<path d="M30.5 6.5 L30.5 14 L23 21.5 L20 18.5 Z" fill="#777" stroke="#fff" stroke-width="1.2" paint-order="stroke"/>
<path d="M21.5 21 C23 24 22 27.5 18 28.3 L8 28.8 L14.5 22 C16.5 19.8 19.5 19.3 21.5 21 Z" fill="#3d7cc9" stroke="#fff" stroke-width="1.2" paint-order="stroke"/>
<path d="M16 23.5 C17 22 19.5 22 20 24" stroke="#fff" stroke-width="1.2" fill="none"/>
</svg>
<div class="t" style="left:149px;top:98px;font-size:12px;color:#444;font-weight:normal;font-style:normal;letter-spacing:0.25px">Conditional</div>
<div class="t" style="left:146px;top:114px;font-size:12px;color:#444;font-weight:normal;font-style:normal;">Formatting</div>
<svg class="r" style="left:208px;top:118px" width="5" height="3"><polygon points="0,0 5,0 2.5,3" fill="#777"/></svg>
<div class="t" style="left:218px;top:98px;font-size:12px;color:#444;font-weight:normal;font-style:normal;letter-spacing:-0.2px">Format as</div>
<div class="t" style="left:226px;top:114px;font-size:12px;color:#444;font-weight:normal;font-style:normal;">Table</div>
<svg class="r" style="left:258px;top:118px" width="5" height="3"><polygon points="0,0 5,0 2.5,3" fill="#777"/></svg>
<div class="t" style="left:285px;top:98px;font-size:12px;color:#444;font-weight:normal;font-style:normal;">Cell</div>
<div class="t" style="left:275px;top:114px;font-size:12px;color:#444;font-weight:normal;font-style:normal;letter-spacing:-0.35px">Styles</div>
<svg class="r" style="left:308px;top:118px" width="5" height="3"><polygon points="0,0 5,0 2.5,3" fill="#777"/></svg>
<div class="t" style="left:215px;top:134px;font-size:11px;color:#666;font-weight:normal;font-style:normal;">Styles</div>
<div class="r" style="left:409px;top:58px;width:43px;height:69px;background:#9fd5b7;"></div>
<svg class="r" style="left:332px;top:62px" width="28" height="29">
<rect x="1.5" y="1.5" width="14" height="5" fill="#fff" stroke="#777"/><path d="M8.5 1.5 V6.5" stroke="#777"/>
<rect x="12.5" y="9.5" width="14" height="5" fill="#c5d9f1" stroke="#777"/><path d="M19.5 9.5 V14.5" stroke="#777"/>
<path d="M2 12 H9 M2 12 L5 9 M2 12 L5 15" stroke="#3a7cc8" stroke-width="2" fill="none"/>
<rect x="1.5" y="17.5" width="14" height="10" fill="#fff" stroke="#777"/><path d="M8.5 17.5 V27.5 M1.5 22.5 H15.5" stroke="#777"/>
</svg>
<svg class="r" style="left:373px;top:62px" width="32" height="30">
<rect x="1.5" y="1.5" width="14" height="5" fill="#fff" stroke="#777"/><path d="M8.5 1.5 V6.5" stroke="#777"/>
<rect x="7.5" y="9.5" width="8" height="5" fill="#c5d9f1" stroke="#777"/>
<path d="M15.5 9.5 L19 12 L15.5 14.5 Z" fill="#c5d9f1"/>
<path d="M15.5 21 V28.5 H1.5 V18.5 H13 M8.5 18.5 V28.5 M1.5 23.5 H15.5" fill="#fff" stroke="#777"/>
<path d="M16 7 L30.5 19.5" stroke="#d9603b" stroke-width="2.4" fill="none"/>
<path d="M30.5 6.5 Q22 11 15.5 20" stroke="#d9603b" stroke-width="2.4" fill="none"/>
</svg>
<svg class="r" style="left:414px;top:60px" width="32" height="34">
<path d="M2.5 2 V7 M24.5 2 V7 M3 4.5 H24 M3 4.5 L6 1.5 M3 4.5 L6 7.5 M24 4.5 L21 1.5 M24 4.5 L21 7.5" stroke="#3a7cc8" stroke-width="1.2" fill="none"/>
<path d="M2.5 8.5 H29.5 V28.5 H2.5 Z" fill="#fff" stroke="#777"/>
<path d="M2.5 28.5 V32.5 H8.5 L10.5 30.5 V28.5 M11.5 28.5 V32.5 H17.5 L20.5 28.5" fill="#fff" stroke="#777"/>
<path d="M9.5 8.5 V28.5 M17.5 8.5 V28.5 M24.5 8.5 V28.5 M2.5 13.5 H29.5 M2.5 23.5 H29.5" stroke="#999" fill="none"/>
<rect x="10" y="14" width="7" height="9" fill="#3d7cc9"/>
</svg>
<div class="t" style="left:331px;top:98px;font-size:12px;color:#444;font-weight:normal;font-style:normal;">Insert</div>
<svg class="r" style="left:343px;top:118px" width="5" height="3"><polygon points="0,0 5,0 2.5,3" fill="#777"/></svg>
<div class="t" style="left:371px;top:98px;font-size:12px;color:#444;font-weight:normal;font-style:normal;">Delete</div>
<svg class="r" style="left:385px;top:118px" width="5" height="3"><polygon points="0,0 5,0 2.5,3" fill="#777"/></svg>
<div class="t" style="left:411px;top:98px;font-size:12px;color:#444;font-weight:normal;font-style:normal;">Format</div>
<svg class="r" style="left:428px;top:118px" width="5" height="3"><polygon points="0,0 5,0 2.5,3" fill="#777"/></svg>
<div class="t" style="left:376px;top:134px;font-size:11px;color:#666;font-weight:normal;font-style:normal;">Cells</div>
<svg class="r" style="left:463px;top:60px" width="18" height="17"><path d="M16 3.5 V2 H2.5 L9.5 8.5 L2.5 15 H16 V13.5" stroke="#444" stroke-width="2" fill="none"/></svg>
<svg class="r" style="left:485px;top:68px" width="5" height="3"><polygon points="0,0 5,0 2.5,3" fill="#777"/></svg>
<svg class="r" style="left:464px;top:84px" width="16" height="17">
<rect x="1.5" y="0.5" width="13" height="15" fill="#fff" stroke="#777"/>
<rect x="1" y="0" width="14" height="3" fill="#777"/>
<path d="M8 5 V13 M4.5 9.5 L8 13 L11.5 9.5" stroke="#3a7cc8" stroke-width="2" fill="none"/></svg>
<svg class="r" style="left:484px;top:91px" width="5" height="3"><polygon points="0,0 5,0 2.5,3" fill="#777"/></svg>
<svg class="r" style="left:464px;top:107px" width="17" height="15">
<path d="M2 9.5 L9.5 2 Q10.5 1 11.5 2 L14 4.5 Q15 5.5 14 6.5 L6.5 13.5 Q5.5 14.5 4.5 13.5 L2 11 Q1 10 2 9.5 Z" fill="#e7788e"/>
<path d="M5 7 L9.5 11.5" stroke="#fff" stroke-width="0.8"/>
<path d="M6 13.5 H15" stroke="#555" stroke-width="1" fill="none"/></svg>
<svg class="r" style="left:484px;top:114px" width="5" height="3"><polygon points="0,0 5,0 2.5,3" fill="#777"/></svg>
<svg class="r" style="left:500px;top:63px" width="33" height="28">
<text x="1.6" y="12.4" font-family="Liberation Sans" font-size="15.5" fill="#3d7cc9" stroke="#3d7cc9" stroke-width="0.5">A</text>
<text x="2.8" y="26.3" font-family="Liberation Sans" font-size="15.5" fill="#8f54b4" stroke="#8f54b4" stroke-width="0.3">Z</text>
<path d="M14 8 H31 V9 L24.5 16.5 V23 H20.5 V16.5 L14 9 Z" fill="#777"/>
<rect x="21.5" y="16.5" width="2" height="5.5" fill="#fff"/></svg>
<svg class="r" style="left:546px;top:64px" width="28" height="25">
<path d="M7 1 H11 V4 H12.5 V9 H16 V4 H17.5 V1 H21.5 V4 H23 V9 H25 V13 H27 V24 H16 V13.5 H12.5 V24 H1 V13 H3 V9 H5 V4 H7 Z" fill="#6d6d6d"/>
<path d="M2.5 14 V22.5 M4.5 10 V13 M6.5 5 V9 M8.5 2 V4 M25.5 14 V22.5 M23.5 10 V13 M21.5 5 V9 M19.5 2 V4" stroke="#fff" stroke-width="1" fill="none"/>
<rect x="13" y="10" width="2.5" height="1.5" fill="#fff"/></svg>
<div class="t" style="left:500px;top:98px;font-size:12px;color:#444;font-weight:normal;font-style:normal;">Sort &amp;</div>
<div class="t" style="left:500px;top:114px;font-size:12px;color:#444;font-weight:normal;font-style:normal;">Filter</div>
<svg class="r" style="left:529px;top:119px" width="5" height="3"><polygon points="0,0 5,0 2.5,3" fill="#777"/></svg>
<div class="t" style="left:542px;top:98px;font-size:12px;color:#444;font-weight:normal;font-style:normal;">Find &amp;</div>
<div class="t" style="left:540px;top:114px;font-size:12px;color:#444;font-weight:normal;font-style:normal;letter-spacing:-0.45px">Select</div>
<svg class="r" style="left:574px;top:119px" width="5" height="3"><polygon points="0,0 5,0 2.5,3" fill="#777"/></svg>
<svg class="r" style="left:629px;top:136px" width="10" height="6"><path d="M1 5 L5 1 L9 5" stroke="#666" stroke-width="2" fill="none"/></svg>
<div class="r" style="left:0px;top:158px;width:643px;height:1px;background:#c6c6c6;"></div>
<div class="r" style="left:0px;top:183px;width:643px;height:1px;background:#c6c6c6;"></div>
<div class="r" style="left:642px;top:158px;width:1px;height:26px;background:#c6c6c6;"></div>
<svg class="r" style="left:628px;top:168px" width="13" height="9"><path d="M1.5 1.5 L6.5 6.5 L11.5 1.5" stroke="#666" stroke-width="3" fill="none"/></svg>
<div class="r" style="left:630px;top:196px;width:13px;height:13px;border:1px solid #ababab;background:#fff"></div>
<svg class="r" style="left:634px;top:201px" width="7" height="4"><polygon points="0,4 7,4 3.5,0" fill="#777"/></svg>
<div class="r" style="left:630px;top:211px;width:13px;height:330px;border:1px solid #ababab;background:#fff"></div>
<div class="r" style="left:409px;top:127px;width:176px;height:386px;border:1px solid #c6c6c6;background:#fff;box-shadow:1px 1px 4px rgba(0,0,0,0.25)"></div>
<div class="r" style="left:411px;top:129px;width:174px;height:22px;background:#ececec;"></div>
<div class="t" style="left:418px;top:135px;font-size:12px;color:#606060;font-weight:bold;font-style:normal;letter-spacing:-0.1px">Cell Size</div>
<div class="t" style="left:442px;top:158px;font-size:12px;color:#444;font-weight:normal;font-style:normal;letter-spacing:0px">Row <u>H</u>eight...</div>
<div class="t" style="left:442px;top:182px;font-size:12px;color:#444;font-weight:normal;font-style:normal;letter-spacing:0px"><u>A</u>utoFit Row Height</div>
<div class="r" style="left:442px;top:200px;width:143px;height:1px;background:#e1e1e1;"></div>
<div class="t" style="left:442px;top:208px;font-size:12px;color:#444;font-weight:normal;font-style:normal;letter-spacing:0px">Column <u>W</u>idth...</div>
<div class="t" style="left:442px;top:232px;font-size:12px;color:#444;font-weight:normal;font-style:normal;letter-spacing:0px">AutoF<u>i</u>t Column Width</div>
<div class="t" style="left:442px;top:256px;font-size:12px;color:#444;font-weight:normal;font-style:normal;letter-spacing:0px"><u>D</u>efault Width...</div>
<div class="r" style="left:411px;top:274px;width:174px;height:23px;background:#ececec;"></div>
<div class="t" style="left:418px;top:280px;font-size:12px;color:#606060;font-weight:bold;font-style:normal;letter-spacing:-0.1px">Visibility</div>
<div class="r" style="left:411px;top:297px;width:174px;height:24px;background:#d3f0e0;"></div>
<div class="t" style="left:442px;top:303px;font-size:12px;color:#444;font-weight:normal;font-style:normal;letter-spacing:0px">Hide &amp; <u>U</u>nhide</div>
<svg class="r" style="left:572px;top:305px" width="4" height="7"><polygon points="0,0 4,3.5 0,7" fill="#666"/></svg>
<div class="r" style="left:411px;top:321px;width:174px;height:23px;background:#ececec;"></div>
<div class="t" style="left:418px;top:327px;font-size:12px;color:#606060;font-weight:bold;font-style:normal;letter-spacing:-0.1px">Organize Sheets</div>
<div class="t" style="left:442px;top:350px;font-size:12px;color:#444;font-weight:normal;font-style:normal;letter-spacing:0px"><u>R</u>ename Sheet</div>
<div class="t" style="left:442px;top:374px;font-size:12px;color:#444;font-weight:normal;font-style:normal;letter-spacing:0px"><u>M</u>ove or Copy Sheet...</div>
<div class="t" style="left:442px;top:398px;font-size:12px;color:#444;font-weight:normal;font-style:normal;letter-spacing:0px"><u>T</u>ab Color</div>
<svg class="r" style="left:572px;top:401px" width="4" height="7"><polygon points="0,0 4,3.5 0,7" fill="#666"/></svg>
<div class="r" style="left:411px;top:416px;width:174px;height:23px;background:#ececec;"></div>
<div class="t" style="left:418px;top:423px;font-size:12px;color:#606060;font-weight:bold;font-style:normal;letter-spacing:-0.1px">Protection</div>
<div class="t" style="left:442px;top:445px;font-size:12px;color:#444;font-weight:normal;font-style:normal;letter-spacing:0px"><u>P</u>rotect Sheet...</div>
<div class="t" style="left:442px;top:469px;font-size:12px;color:#444;font-weight:normal;font-style:normal;letter-spacing:0px"><u>L</u>ock Cell</div>
<div class="r" style="left:442px;top:487px;width:143px;height:1px;background:#e1e1e1;"></div>
<div class="t" style="left:442px;top:495px;font-size:12px;color:#444;font-weight:normal;font-style:normal;letter-spacing:-0.2px">Format C<u>e</u>lls...</div>
<svg class="r" style="left:414px;top:155px" width="18" height="18">
<path d="M3.5 1.5 V7.5 M3.5 9.5 V16.5 M1 4 L3.5 1.5 L6 4 M1 14 L3.5 16.5 L6 14" stroke="#3a7cc8" stroke-width="1.1" fill="none"/>
<path d="M16 2.5 H8.5 V15.5 H16" stroke="#555" stroke-width="1" fill="none"/></svg>
<svg class="r" style="left:414px;top:206px" width="18" height="16">
<path d="M2.5 8 V1.5 H15.5 V8" stroke="#555" stroke-width="1" fill="none"/>
<path d="M1.5 12.5 H8 M10 12.5 H16.5 M4 10 L1.5 12.5 L4 15 M14 10 L16.5 12.5 L14 15" stroke="#3a7cc8" stroke-width="1.1" fill="none"/></svg>
<svg class="r" style="left:415px;top:442px" width="16" height="14">
<rect x="0.5" y="0.5" width="14" height="12" fill="#fff" stroke="#777"/>
<path d="M0.5 4.5 H14.5 M0.5 8.5 H14.5 M5 0.5 V12.5 M10 0.5 V12.5" stroke="#999" fill="none"/></svg>
<svg class="r" style="left:413px;top:466px" width="21" height="20">
<rect x="0.5" y="0.5" width="19" height="18" fill="#e3f1e8" stroke="#a5d6b8"/>
<rect x="4" y="6.5" width="11" height="9" fill="#e8bd84"/>
<circle cx="9.5" cy="10" r="1.4" fill="#fff"/><rect x="9" y="10" width="1" height="3" fill="#fff"/></svg>
<svg class="r" style="left:416px;top:493px" width="15" height="16">
<rect x="0.5" y="0.5" width="13" height="15" fill="#fff" stroke="#555"/>
<rect x="0" y="0" width="14" height="3" fill="#3d7cc9"/>
<circle cx="4" cy="7" r="1.3" fill="#666"/><circle cx="4" cy="11.5" r="1.3" fill="none" stroke="#666" stroke-width="0.9"/>
<path d="M6.5 7 H11 M6.5 11.5 H11" stroke="#666" fill="none"/></svg>
<div class="r" style="left:264px;top:297px;width:145px;height:148px;border:1px solid #c6c6c6;background:#fff;box-shadow:1px 1px 4px rgba(0,0,0,0.25)"></div>
<div class="t" style="left:297px;top:305px;font-size:12px;color:#444;font-weight:normal;font-style:normal;">Hide <u>R</u>ows</div>
<div class="t" style="left:297px;top:329px;font-size:12px;color:#444;font-weight:normal;font-style:normal;">Hide <u>C</u>olumns</div>
<div class="t" style="left:297px;top:353px;font-size:12px;color:#444;font-weight:normal;font-style:normal;">Hide <u>S</u>heet</div>
<div class="r" style="left:297px;top:371px;width:111px;height:1px;background:#e1e1e1;"></div>
<div class="t" style="left:297px;top:379px;font-size:12px;color:#444;font-weight:normal;font-style:normal;">Unhide R<u>o</u>ws</div>
<div class="t" style="left:297px;top:403px;font-size:12px;color:#444;font-weight:normal;font-style:normal;">Unhide Co<u>l</u>umns</div>
<div class="r" style="left:266px;top:421px;width:142px;height:24px;background:#d3f0e0;"></div>
<div class="t" style="left:297px;top:427px;font-size:12px;color:#6a6a6a;font-weight:normal;font-style:normal;letter-spacing:-0.25px">Un<u>h</u>ide Sheet...</div>
<div class="r" style="left:388px;top:448px;width:83px;height:23px;border:1px solid #bdbdbd;background:#fff;box-shadow:1px 1px 3px rgba(0,0,0,0.2)"></div>
<div class="t" style="left:393px;top:456px;font-size:12px;color:#575757;font-weight:normal;font-style:normal;letter-spacing:-0.3px">Unhide Sheets</div>
<svg class="r" style="left:387px;top:427px" width="15" height="22">
<path d="M1.5 1.5 V18 L5.3 14.3 L8.3 19.8 L10.8 18.6 L8 13.2 H13 Z" fill="#fff" stroke="#111" stroke-width="1"/></svg>
<div class="r" style="left:0px;top:0px;width:650px;height:1px;background:#000;"></div>
<div class="r" style="left:0px;top:1px;width:650px;height:1px;background:#217346;"></div>
<div class="r" style="left:0px;top:0px;width:1px;height:538px;background:#000;"></div>
<div class="r" style="left:648px;top:0px;width:1px;height:538px;background:#217346;"></div>
<div class="r" style="left:649px;top:0px;width:1px;height:538px;background:#000;"></div>
<div class="r" style="left:0px;top:537px;width:650px;height:1px;background:#000;"></div>
</body></html>
